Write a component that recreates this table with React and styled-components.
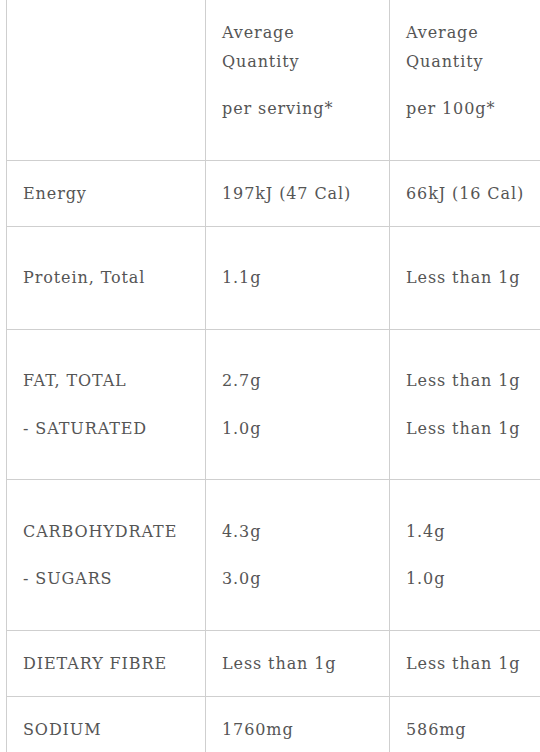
import React from "react";
import styled, { createGlobalStyle } from "styled-components";

const Global = createGlobalStyle`
  body {
    margin: 0;
    background: #fff;
    overflow: hidden;
  }
`;

const Wrap = styled.div`
  width: 540px;
  height: 752px;
  overflow: hidden;
  padding-left: 6px;
  box-sizing: border-box;
`;

const Table = styled.table`
  border-collapse: collapse;
  margin-top: -20px;
  width: 580px;
  table-layout: fixed;
  font-family: "DejaVu Serif", serif;
  font-size: 16px;
  letter-spacing: 0.9px;
  color: #555;
`;

const Col = styled.col`
  width: ${(p) => p.$w || "auto"};
`;

const Cell = styled.td`
  border: 1px solid #cfcfcf;
  padding: 18px 10px 18px 16px;
  line-height: 29px;
  vertical-align: middle;
  white-space: nowrap;
`;

const Line = styled.p`
  margin: 18.5px 0;
`;

const rows = [
  { cells: ["Energy", "197kJ (47 Cal)", "66kJ (16 Cal)"] },
  { cells: [["Protein, Total"], ["1.1g"], ["Less than 1g"]] },
  {
    cells: [
      ["FAT, TOTAL", "- SATURATED"],
      ["2.7g", "1.0g"],
      ["Less than 1g", "Less than 1g"],
    ],
  },
  {
    cells: [
      ["CARBOHYDRATE", "- SUGARS"],
      ["4.3g", "3.0g"],
      ["1.4g", "1.0g"],
    ],
  },
  { cells: ["DIETARY FIBRE", "Less than 1g", "Less than 1g"] },
  { cells: ["SODIUM", "1760mg", "586mg"] },
];

function Content({ value }) {
  if (Array.isArray(value)) {
    return value.map((v, i) => <Line key={i}>{v}</Line>);
  }
  return value;
}

export default function App() {
  return (
    <Wrap>
      <Global />
      <Table>
        <colgroup>
          <Col $w="199px" />
          <Col $w="184px" />
          <Col />
        </colgroup>
        <thead>
          <tr>
            <Cell />
            <Cell>
              <Line>
                Average
                <br />
                Quantity
              </Line>
              <Line>per serving*</Line>
            </Cell>
            <Cell>
              <Line>
                Average
                <br />
                Quantity
              </Line>
              <Line>per 100g*</Line>
            </Cell>
          </tr>
        </thead>
        <tbody>
          {rows.map((row, r) => (
            <tr key={r}>
              {row.cells.map((c, i) => (
                <Cell key={i}>
                  <Content value={c} />
                </Cell>
              ))}
            </tr>
          ))}
        </tbody>
      </Table>
    </Wrap>
  );
}
